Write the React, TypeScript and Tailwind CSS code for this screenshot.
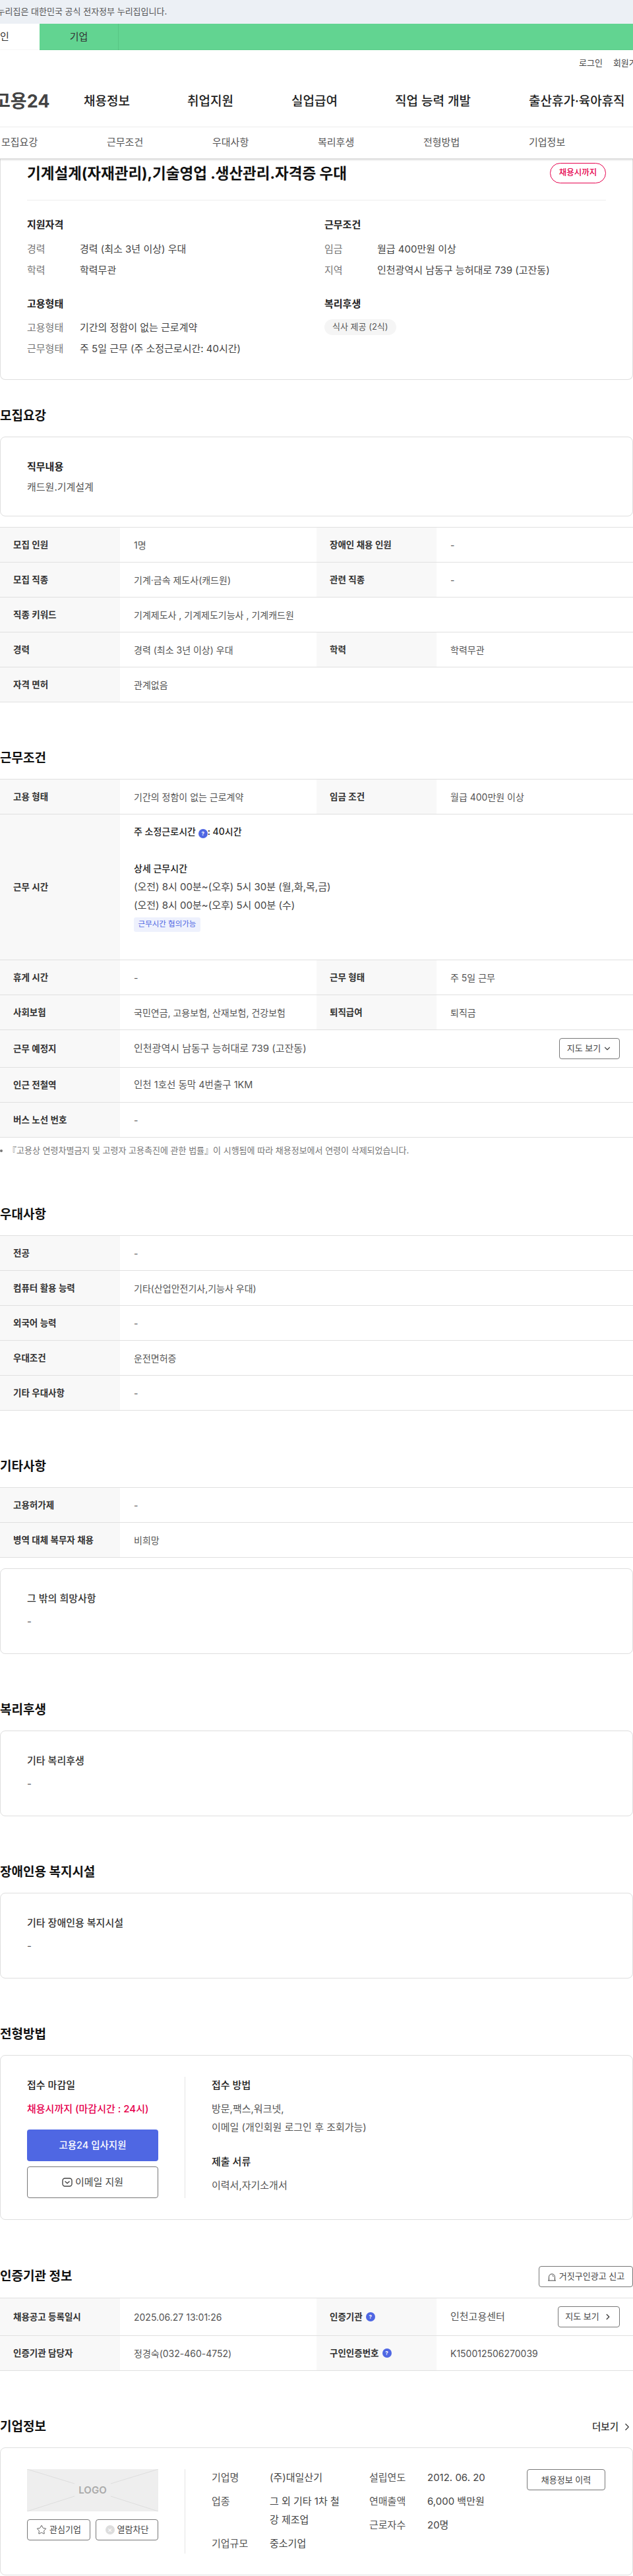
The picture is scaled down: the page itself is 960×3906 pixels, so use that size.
import { ChevronDown, ChevronRight, Star } from 'lucide-react';
import type { ReactNode } from 'react';

const subNav = ['모집요강', '근무조건', '우대사항', '복리후생', '전형방법', '기업정보'];

function Help() {
  return (
    <span className="inline-flex w-[14px] h-[14px] rounded-full bg-[#4f67e3] text-white text-[8px] font-bold items-center justify-center align-[-1px]">?</span>
  );
}

function Heading({ children, className = '' }: { children: ReactNode; className?: string }) {
  return <h2 className={`h-[28px] leading-[28px] text-[19px] font-bold text-[#111] mb-[17px] ${className}`}>{children}</h2>;
}

function Row({ children, tall = false }: { children: ReactNode; tall?: boolean }) {
  return <div className={`flex border-b border-[#e0e0e0] ${tall ? 'h-[57px]' : 'h-[53px]'}`}>{children}</div>;
}

function Th({ children }: { children: ReactNode }) {
  return <div className="w-[182px] shrink-0 bg-[#f8f8f8] pl-[20px] flex items-center text-[13.5px] font-semibold text-[#333] whitespace-nowrap">{children}</div>;
}

function Td({ children, half = false, size = 'text-[14px]' }: { children: ReactNode; half?: boolean; size?: string }) {
  return <div className={`${half ? 'w-[298px]' : 'flex-1'} ${size} pl-[21px] flex items-center text-[#555] whitespace-nowrap`}>{children}</div>;
}

function Pair({ a, b, c, d }: { a: ReactNode; b: ReactNode; c: ReactNode; d: ReactNode }) {
  return (
    <Row>
      <Th>{a}</Th>
      <Td half>{b}</Td>
      <Th>{c}</Th>
      <Td>{d}</Td>
    </Row>
  );
}

function Single({ a, b }: { a: ReactNode; b: ReactNode }) {
  return (
    <Row>
      <Th>{a}</Th>
      <Td>{b}</Td>
    </Row>
  );
}

function Table({ children }: { children: ReactNode }) {
  return <div className="border-t border-[#e0e0e0]">{children}</div>;
}

function Info({ label, value }: { label: string; value: string }) {
  return (
    <div className="flex h-[32px] items-center">
      <span className="w-[80px] text-[#777]">{label}</span>
      <span className="text-[#444]">{value}</span>
    </div>
  );
}

function TextCard({ title, className = '' }: { title: string; className?: string }) {
  return (
    <div className={`border border-[#dedede] rounded-[8px] h-[130px] px-[40px] pt-[33px] ${className}`}>
      <div className="h-[24px] leading-[24px] font-medium text-[#333]">{title}</div>
      <div className="mt-[7px] leading-[32px] text-[#555]">-</div>
    </div>
  );
}

export default function App() {
  return (
    <div className="w-[960px] h-[3906px] overflow-hidden bg-white text-[15px] text-[#333] font-['Inter','Noto_Sans_CJK_KR',sans-serif]">
      {/* top notice */}
      <div className="h-[36px] bg-[#ecf0f5] flex items-center text-[13px] text-[#555] whitespace-nowrap">
        <span className="-ml-[20px]">이 누리집은 대한민국 공식 전자정부 누리집입니다.</span>
      </div>
      <div className="h-[40px] bg-[#62d491] flex text-[15px] text-[#333]">
        <div className="-ml-[60px] w-[120px] bg-white flex items-center justify-center">개인</div>
        <div className="w-[120px] flex items-center justify-center border-r border-[#58c585]">기업</div>
      </div>

      {/* header */}
      <div className="relative z-10 bg-white shadow-[0_1px_3px_rgba(0,0,0,0.2)]">
        <div className="h-[40px] flex items-center pl-[878px] gap-[16px] text-[13px] text-[#444] whitespace-nowrap">
          <span>로그인</span>
          <span>회원가입</span>
        </div>
        <div className="h-[77px] flex items-center border-b border-[#ececec] whitespace-nowrap text-[19px] font-medium text-[#222]">
          <span className="-ml-[9px] w-[136px] text-[27px] font-bold text-[#444]">고용24</span>
          <span className="w-[157px]">채용정보</span>
          <span className="w-[158px]">취업지원</span>
          <span className="w-[157px]">실업급여</span>
          <span className="w-[203px]">직업 능력 개발</span>
          <span>출산휴가·육아휴직</span>
        </div>
        <div className="h-[48px] flex items-center border-b border-[#ddd] text-[#555] whitespace-nowrap">
          {subNav.map(s => (
            <span key={s} className="w-[178.4px] pl-[2px]">{s}</span>
          ))}
        </div>
      </div>

      {/* summary card */}
      <div className="border-x border-b border-[#dedede] rounded-b-[8px] px-[40px] pt-[6px] pb-[30px]">
        <div className="flex items-center justify-between h-[31px] mb-[25px]">
          <h1 className="text-[22.5px] font-bold text-[#111] whitespace-nowrap">기계설계(자재관리),기술영업 .생산관리.자격증 우대</h1>
          <span className="h-[31px] w-[85px] border border-[#e6004d] rounded-full text-[#e6004d] text-[12.5px] font-medium flex items-center justify-center">채용시까지</span>
        </div>
        <div className="border-t border-[#eee] pt-[25px] grid grid-cols-[451px_1fr]">
          <div>
            <div className="h-[24px] leading-[24px] font-bold text-[#222] mb-[9px]">지원자격</div>
            <Info label="경력" value="경력 (최소 3년 이상) 우대" />
            <Info label="학력" value="학력무관" />
            <div className="h-[24px] leading-[24px] font-bold text-[#222] mt-[23px] mb-[8px]">고용형태</div>
            <Info label="고용형태" value="기간의 정함이 없는 근로계약" />
            <Info label="근무형태" value="주 5일 근무 (주 소정근로시간: 40시간)" />
          </div>
          <div>
            <div className="h-[24px] leading-[24px] font-bold text-[#222] mb-[9px]">근무조건</div>
            <Info label="임금" value="월급 400만원 이상" />
            <Info label="지역" value="인천광역시 남동구 능허대로 739 (고잔동)" />
            <div className="h-[24px] leading-[24px] font-bold text-[#222] mt-[23px] mb-[11px]">복리후생</div>
            <span className="inline-flex h-[24px] px-[12px] items-center rounded-full bg-[#f5f5f5] text-[13px] text-[#555]">식사 제공 (2식)</span>
          </div>
        </div>
      </div>

      {/* 모집요강 */}
      <div className="pt-[41px]">
        <Heading>모집요강</Heading>
        <div className="border border-[#dedede] rounded-[8px] h-[121px] px-[40px] pt-[33px]">
          <div className="h-[24px] leading-[24px] font-bold text-[#222]">직무내용</div>
          <div className="mt-[3px] leading-[32px] text-[#555]">캐드원.기계설계</div>
        </div>
        <div className="mt-[16px]">
          <Table>
            <Pair a="모집 인원" b="1명" c="장애인 채용 인원" d="-" />
            <Pair a="모집 직종" b="기계·금속 제도사(캐드원)" c="관련 직종" d="-" />
            <Single a="직종 키워드" b="기계제도사 , 기계제도기능사 , 기계캐드원" />
            <Pair a="경력" b="경력 (최소 3년 이상) 우대" c="학력" d="학력무관" />
            <Single a="자격 면허" b="관계없음" />
          </Table>
        </div>
      </div>

      {/* 근무조건 */}
      <div className="pt-[71px]">
        <Heading>근무조건</Heading>
        <Table>
          <Pair a="고용 형태" b="기간의 정함이 없는 근로계약" c="임금 조건" d="월급 400만원 이상" />
          <div className="flex h-[221px] border-b border-[#e0e0e0]">
            <Th>근무 시간</Th>
            <div className="flex-1 pl-[21px] pt-[12px] text-[#444]">
              <div className="leading-[28px] text-[14px] font-medium text-[#222]">주 소정근로시간 <Help />: 40시간</div>
              <div className="mt-[28px] leading-[28px] text-[14px] font-medium text-[#222]">상세 근무시간</div>
              <div className="leading-[28px]">(오전) 8시 00분~(오후) 5시 30분 (월,화,목,금)</div>
              <div className="leading-[28px]">(오전) 8시 00분~(오후) 5시 00분 (수)</div>
              <span className="mt-[4px] inline-flex h-[22px] w-[101px] justify-center items-center rounded-[3px] bg-[#eef1fd] text-[#4f67e3] text-[11.5px] whitespace-nowrap">근무시간 협의가능</span>
            </div>
          </div>
          <Pair a="휴게 시간" b="-" c="근무 형태" d="주 5일 근무" />
          <Pair a="사회보험" b="국민연금, 고용보험, 산재보험, 건강보험" c="퇴직급여" d="퇴직금" />
          <Row tall>
            <Th>근무 예정지</Th>
            <Td size="text-[15px]">인천광역시 남동구 능허대로 739 (고잔동)</Td>
            <div className="flex items-center pr-[20px]">
              <button className="w-[92px] h-[32px] border border-[#777] rounded-[4px] text-[13px] text-[#444] flex items-center justify-center gap-[3px]">
                지도 보기 <ChevronDown size={14} />
              </button>
            </div>
          </Row>
          <Row>
            <Th>인근 전철역</Th>
            <Td size="text-[14.5px]">인천 1호선 동막 4번출구 1KM</Td>
          </Row>
          <Single a="버스 노선 번호" b="-" />
        </Table>
        <div className="mt-[10px] h-[20px] flex items-center text-[13px] text-[#777] whitespace-nowrap">
          <span className="w-[4px] h-[4px] rounded-full bg-[#777] mr-[8px]" />
          『고용상 연령차별금지 및 고령자 고용촉진에 관한 법률』이 시행됨에 따라 채용정보에서 연령이 삭제되었습니다.
        </div>
      </div>

      {/* 우대사항 */}
      <div className="pt-[73px]">
        <Heading>우대사항</Heading>
        <Table>
          <Single a="전공" b="-" />
          <Single a="컴퓨터 활용 능력" b="기타(산업안전기사,기능사 우대)" />
          <Single a="외국어 능력" b="-" />
          <Single a="우대조건" b="운전면허증" />
          <Single a="기타 우대사항" b="-" />
        </Table>
      </div>

      {/* 기타사항 */}
      <div className="pt-[71px]">
        <Heading>기타사항</Heading>
        <Table>
          <Single a="고용허가제" b="-" />
          <Single a="병역 대체 복무자 채용" b="비희망" />
        </Table>
        <TextCard title="그 밖의 희망사항" className="mt-[16px]" />
      </div>

      <div className="pt-[71px]">
        <Heading>복리후생</Heading>
        <TextCard title="기타 복리후생" />
      </div>

      <div className="pt-[71px]">
        <Heading>장애인용 복지시설</Heading>
        <TextCard title="기타 장애인용 복지시설" />
      </div>

      {/* 전형방법 */}
      <div className="pt-[71px]">
        <Heading>전형방법</Heading>
        <div className="border border-[#dedede] rounded-[8px] h-[250px] pl-[40px] py-[32px] flex">
          <div className="w-[199px] mr-[40px] shrink-0">
            <div className="h-[26px] leading-[26px] font-medium text-[#222]">접수 마감일</div>
            <div className="mt-[11px] leading-[24px] font-medium text-[#e6004d] whitespace-nowrap">채용시까지 (마감시간 : 24시)</div>
            <button className="mt-[19px] w-full h-[48px] rounded-[4px] bg-[#4f67e3] text-white text-[14.5px] font-medium">고용24 입사지원</button>
            <button className="mt-[8px] w-full h-[48px] rounded-[4px] border border-[#777] text-[#444] flex items-center justify-center gap-[4px]">
              <svg width="16" height="14" viewBox="0 0 16 14" fill="none" stroke="#444" strokeWidth="1.4">
                <rect x="1" y="1" width="14" height="12" rx="3.5" />
                <path d="M4.5 5.5 8 8.5l3.5-3" />
              </svg>
              이메일 지원
            </button>
          </div>
          <div className="border-l border-[#e5e5e5] pl-[40px]">
            <div className="h-[26px] leading-[26px] font-medium text-[#222]">접수 방법</div>
            <div className="mt-[9px] leading-[28px] text-[#555]">방문,팩스,워크넷,</div>
            <div className="leading-[28px] text-[#555]">이메일 (개인회원 로그인 후 조회가능)</div>
            <div className="mt-[24px] h-[28px] leading-[28px] font-medium text-[#222]">제출 서류</div>
            <div className="mt-[8px] leading-[28px] text-[#555]">이력서,자기소개서</div>
          </div>
        </div>
      </div>

      {/* 인증기관 정보 */}
      <div className="pt-[70px]">
        <div className="flex items-center justify-between h-[32px] mb-[16px]">
          <h2 className="text-[19px] font-bold text-[#111]">인증기관 정보</h2>
          <button className="w-[143px] h-[32px] border border-[#777] rounded-[4px] text-[13px] text-[#444] flex items-center justify-center gap-[4px]">
            <svg width="14" height="13" viewBox="0 0 14 13" fill="none" stroke="#444" strokeWidth="1">
              <path d="M2.5 12V6.5a4.5 4.5 0 0 1 9 0V12M1 12h12M7.5 4.2a2.4 2.4 0 0 1 1.8 2" />
            </svg>
            거짓구인광고 신고
          </button>
        </div>
        <Table>
          <Row tall>
            <Th>채용공고 등록일시</Th>
            <Td half>2025.06.27 13:01:26</Td>
            <Th><span className="flex items-center gap-[5px]">인증기관 <Help /></span></Th>
            <Td size="text-[15px]">인천고용센터</Td>
            <div className="flex items-center pr-[20px]">
              <button className="w-[94px] h-[32px] border border-[#777] rounded-[4px] text-[13px] text-[#444] flex items-center justify-center gap-[6px]">
                지도 보기 <ChevronRight size={14} strokeWidth={2.5} />
              </button>
            </div>
          </Row>
          <Pair a="인증기관 담당자" b="정경숙(032-460-4752)" c={<span className="flex items-center gap-[5px]">구인인증번호 <Help /></span>} d="K150012506270039" />
        </Table>
      </div>

      {/* 기업정보 */}
      <div className="pt-[71px]">
        <div className="flex items-center justify-between h-[28px] mb-[17px]">
          <h2 className="text-[19px] font-bold text-[#111]">기업정보</h2>
          <span className="flex items-center gap-[4px] text-[14.5px] font-medium text-[#333]">더보기 <ChevronRight size={18} strokeWidth={1.5} /></span>
        </div>
        <div className="border border-[#dedede] rounded-[8px] h-[194px] pl-[40px] pr-[40px] pt-[32px] flex">
          <div className="w-[199px] mr-[40px] shrink-0">
            <div className="h-[64px] bg-[#eee] relative flex items-center justify-center overflow-hidden">
              <svg className="absolute inset-0 w-full h-full" viewBox="0 0 199 64" preserveAspectRatio="none" stroke="#ddd" strokeWidth="1">
                <path d="M0 0 L72 22 M199 0 L127 22 M0 64 L72 41 M199 64 L127 41" />
              </svg>
              <span className="relative text-[15px] font-semibold text-[#aaa]">LOGO</span>
            </div>
            <div className="mt-[12px] flex justify-between">
              <button className="w-[96px] h-[32px] border border-[#777] rounded-[4px] text-[13px] text-[#444] flex items-center justify-center gap-[4px]">
                <Star size={16} strokeWidth={1.3} /> 관심기업
              </button>
              <button className="w-[95px] h-[32px] border border-[#777] rounded-[4px] text-[13px] text-[#444] flex items-center justify-center gap-[4px]">
                <span className="w-[14px] h-[14px] rounded-full bg-[#ddd] text-white text-[11px] leading-none flex items-center justify-center">×</span> 열람차단
              </button>
            </div>
          </div>
          <div className="h-[128px] border-l border-[#e5e5e5] pl-[40px] flex leading-[28px] text-[#555]">
            <div className="w-[239px] shrink-0 -mt-[1px]">
              <div className="flex mb-[8px]"><span className="w-[88px] shrink-0">기업명</span><span className="text-[#444]">(주)대일산기</span></div>
              <div className="flex mb-[8px]"><span className="w-[88px] shrink-0">업종</span><span className="w-[114px] break-all text-[#444]">그 외 기타 1차 철강 제조업</span></div>
              <div className="flex"><span className="w-[88px] shrink-0">기업규모</span><span className="text-[#444]">중소기업</span></div>
            </div>
            <div className="w-[239px] shrink-0 -mt-[1px]">
              <div className="flex mb-[8px]"><span className="w-[88px] shrink-0">설립연도</span><span className="text-[#444]">2012. 06. 20</span></div>
              <div className="flex mb-[8px]"><span className="w-[88px] shrink-0">연매출액</span><span className="text-[#444]">6,000 백만원</span></div>
              <div className="flex"><span className="w-[88px] shrink-0">근로자수</span><span className="text-[#444]">20명</span></div>
            </div>
            <button className="w-[119px] h-[32px] border border-[#777] rounded-[4px] text-[13px] text-[#444] flex items-center justify-center shrink-0">채용정보 이력</button>
          </div>
        </div>
      </div>
    </div>
  );
}
